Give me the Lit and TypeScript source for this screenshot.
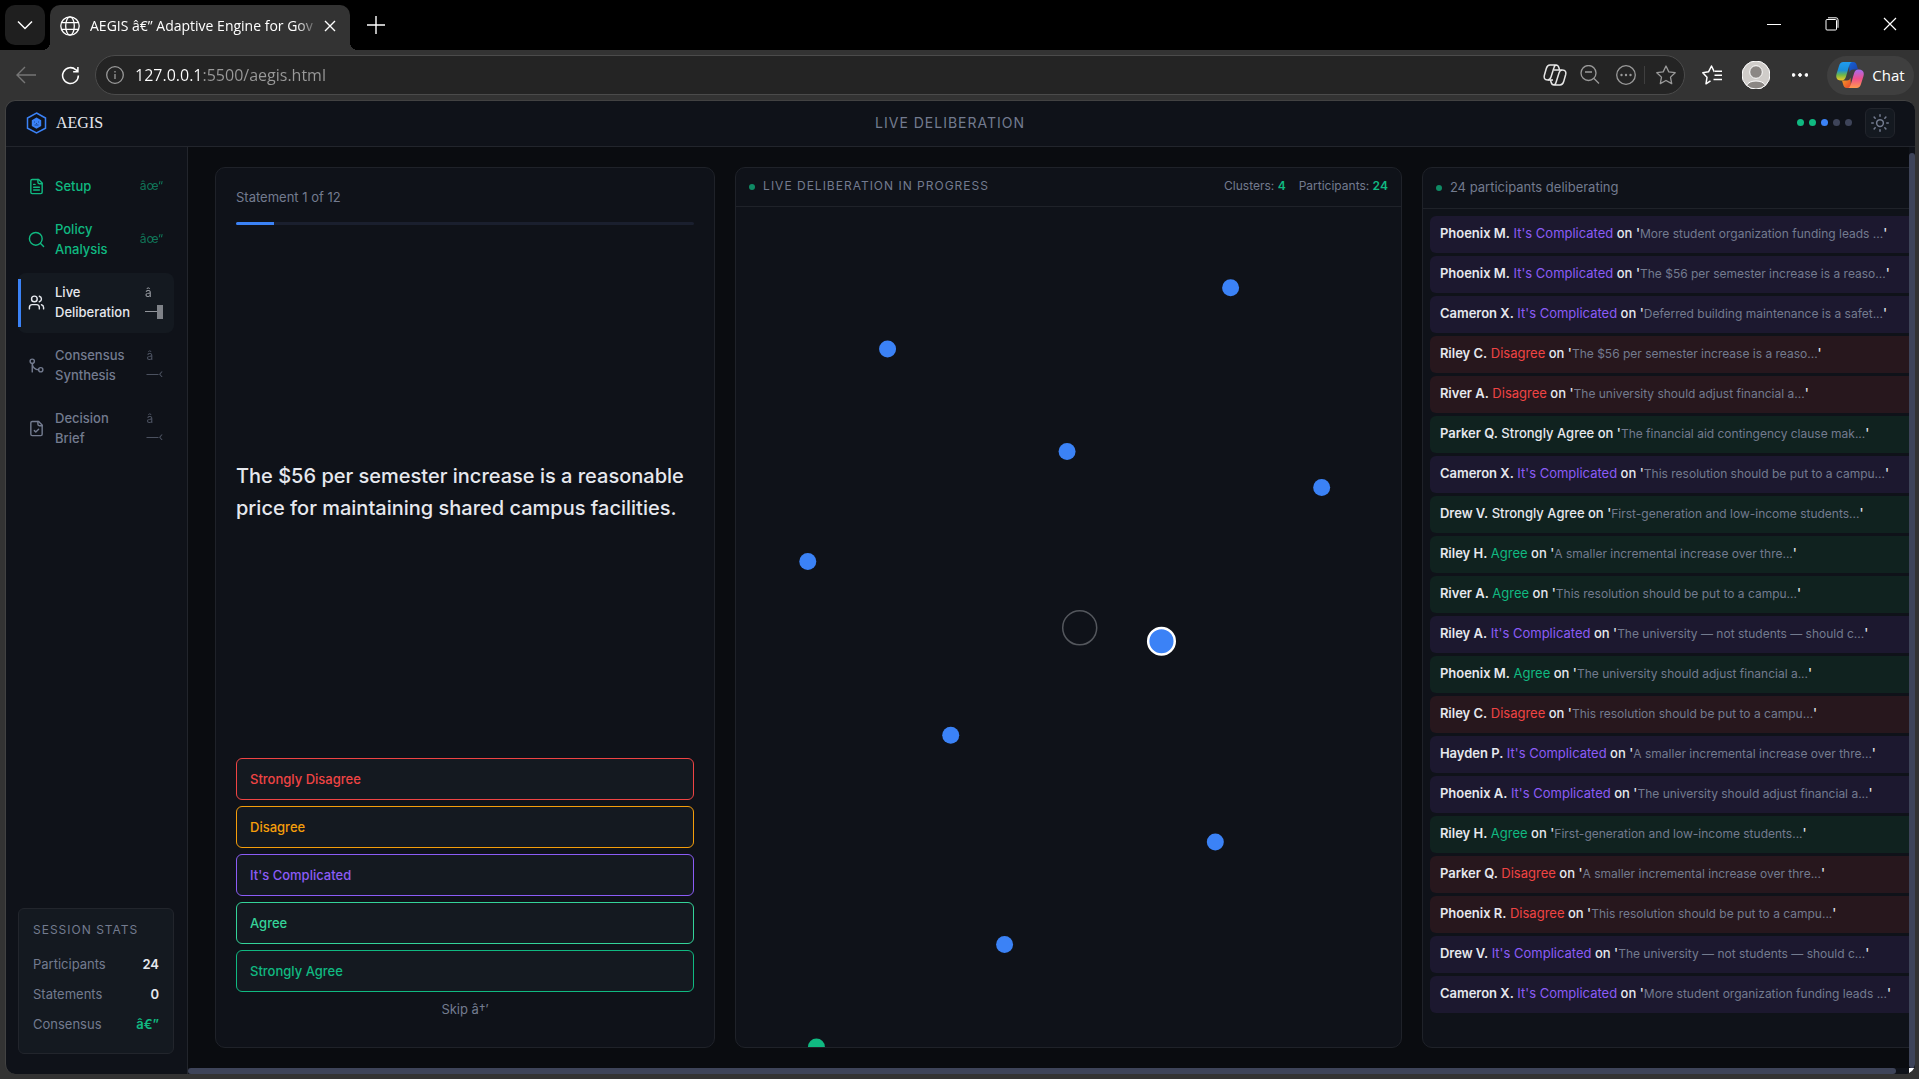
import { LitElement, html, css, svg } from "lit";
import { customElement } from "lit/decorators.js";
import { classMap } from "lit/directives/class-map.js";

type Vote = "complicated" | "disagree" | "agree" | "strong";

const VOTE_LABEL: Record<Vote, string> = {
  complicated: "It's Complicated",
  disagree: "Disagree",
  agree: "Agree",
  strong: "Strongly Agree",
};

const FEED: [string, Vote, string][] = [
  ["Phoenix M.", "complicated", "More student organization funding leads ..."],
  ["Phoenix M.", "complicated", "The $56 per semester increase is a reaso..."],
  ["Cameron X.", "complicated", "Deferred building maintenance is a safet..."],
  ["Riley C.", "disagree", "The $56 per semester increase is a reaso..."],
  ["River A.", "disagree", "The university should adjust financial a..."],
  ["Parker Q.", "strong", "The financial aid contingency clause mak..."],
  ["Cameron X.", "complicated", "This resolution should be put to a campu..."],
  ["Drew V.", "strong", "First-generation and low-income students..."],
  ["Riley H.", "agree", "A smaller incremental increase over thre..."],
  ["River A.", "agree", "This resolution should be put to a campu..."],
  ["Riley A.", "complicated", "The university — not students — should c..."],
  ["Phoenix M.", "agree", "The university should adjust financial a..."],
  ["Riley C.", "disagree", "This resolution should be put to a campu..."],
  ["Hayden P.", "complicated", "A smaller incremental increase over thre..."],
  ["Phoenix A.", "complicated", "The university should adjust financial a..."],
  ["Riley H.", "agree", "First-generation and low-income students..."],
  ["Parker Q.", "disagree", "A smaller incremental increase over thre..."],
  ["Phoenix R.", "disagree", "This resolution should be put to a campu..."],
  ["Drew V.", "complicated", "The university — not students — should c..."],
  ["Cameron X.", "complicated", "More student organization funding leads ..."],
];

/* Participant positions as percentages of the map area. */
const NODES: [number, number][] = [
  [74.4, 9.6],
  [22.8, 16.9],
  [49.8, 29.1],
  [88.1, 33.4],
  [10.8, 42.2],
  [32.3, 62.9],
  [72.1, 75.6],
  [40.4, 87.8],
];

const icons = {
  file: svg`<path d="M15 2H6a2 2 0 0 0-2 2v16a2 2 0 0 0 2 2h12a2 2 0 0 0 2-2V7Z"/><path d="M14 2v4a2 2 0 0 0 2 2h4"/><path d="M10 9H8"/><path d="M16 13H8"/><path d="M16 17H8"/>`,
  search: svg`<circle cx="11" cy="11" r="9"/><path d="m22 22-4.2-4.2"/>`,
  users: svg`<path d="M16 21v-2a4 4 0 0 0-4-4H6a4 4 0 0 0-4 4v2"/><circle cx="9" cy="7" r="4"/><path d="M22 21v-2a4 4 0 0 0-3-3.87"/><path d="M16 3.13a4 4 0 0 1 0 7.75"/>`,
  merge: svg`<circle cx="18" cy="18" r="3"/><circle cx="6" cy="6" r="3"/><path d="M6 21V9a9 9 0 0 0 9 9"/>`,
  check: svg`<path d="M15 2H6a2 2 0 0 0-2 2v16a2 2 0 0 0 2 2h12a2 2 0 0 0 2-2V7Z"/><path d="M14 2v4a2 2 0 0 0 2 2h4"/><path d="m9 15 2 2 4-4"/>`,
};

@customElement("browser-bar")
class BrowserBar extends LitElement {
  static styles = css`
    :host {
      display: block;
      font-family: "Open Sans", "Noto Sans", sans-serif;
      color: #fff;
    }
    button {
      font: inherit;
      color: inherit;
      background: none;
      border: 0;
      padding: 0;
      display: flex;
      align-items: center;
      justify-content: center;
      flex: none;
    }
    svg {
      display: block;
      fill: none;
      stroke: currentColor;
      flex: none;
    }
    .tabs {
      height: 50px;
      background: #000;
      display: flex;
      align-items: flex-start;
      padding: 5px 0 0 5px;
      box-sizing: border-box;
    }
    .menu {
      width: 40px;
      height: 40px;
      border-radius: 10px;
      background: #1f1f1f;
      margin-right: 5px;
    }
    .tab {
      position: relative;
      width: 300px;
      height: 45px;
      box-sizing: border-box;
      padding: 0 13px 4px 10px;
      border-radius: 10px 10px 0 0;
      background: #333;
      display: flex;
      align-items: center;
      gap: 10px;
      font-size: 14px;
    }
    .tab::before,
    .tab::after {
      content: "";
      position: absolute;
      bottom: 0;
      width: 8px;
      height: 8px;
    }
    .tab::before {
      left: -8px;
      background: radial-gradient(circle at 0 0, transparent 8px, #333 8px);
    }
    .tab::after {
      right: -8px;
      background: radial-gradient(circle at 100% 0, transparent 8px, #333 8px);
    }
    .title {
      flex: 1;
      min-width: 0;
      white-space: nowrap;
      -webkit-mask-image: linear-gradient(90deg, #000 90%, transparent);
      mask-image: linear-gradient(90deg, #000 90%, transparent);
    }
    .close {
      width: 14px;
      height: 20px;
      margin-left: -6px;
    }
    .new {
      width: 52px;
      height: 40px;
    }
    .win {
      margin-left: auto;
      display: flex;
    }
    .win button {
      width: 58px;
      height: 38px;
    }
    .tools {
      height: 50px;
      background: #333;
      display: flex;
      align-items: center;
      padding: 0 5px 0 3px;
    }
    .nav {
      width: 45px;
      height: 40px;
    }
    .dim {
      color: #767676;
    }
    .url {
      flex: 1;
      height: 40px;
      box-sizing: border-box;
      margin: 0 5px 0 2px;
      border: 1px solid #4b4b4b;
      border-radius: 20px;
      background: #242424;
      color: #9a9a9a;
      display: flex;
      align-items: center;
    }
    .info {
      margin: 0 11px 0 10px;
    }
    .address {
      flex: 1;
      min-width: 0;
      border: 0;
      padding: 0;
      outline: 0;
      font: inherit;
      font-size: 16px;
      line-height: 24px;
      background: linear-gradient(90deg, #fff 67px, #9a9a9a 67px);
      -webkit-background-clip: text;
      background-clip: text;
      color: transparent;
    }
    .url button {
      width: 36px;
      height: 36px;
    }
    .url .bright {
      color: #e6e6e6;
      width: 34px;
    }
    .sep {
      width: 1px;
      height: 18px;
      margin-right: 3px;
      background: #3f3f3f;
    }
    .tool {
      width: 44px;
      height: 40px;
    }
    .chat {
      width: 87px;
      height: 39px;
      margin-left: 5px;
      border-radius: 20px;
      background: #3f3f3f;
      gap: 8px;
      font-size: 15px;
    }
  `;

  render() {
    return html`
      <div class="tabs">
        <button class="menu" aria-label="Tab actions">
          <svg width="16" height="10" viewBox="0 0 16 10" stroke-width="1.5"><path d="M1 1.5 8 8.500l7-7" /></svg>
        </button>
        <div class="tab">
          <svg width="20" height="20" viewBox="0 0 20 20" stroke-width="1.3">
            <circle cx="10" cy="10" r="9.200" />
            <ellipse cx="10" cy="10" rx="4.300" ry="9.200" />
            <path d="M1.500 6.700h17M1.500 13.300h17" />
          </svg>
          <span class="title">AEGIS â€” Adaptive Engine for Gov</span>
          <button class="close" aria-label="Close tab">
            <svg width="12" height="12" viewBox="0 0 12 12" stroke-width="1.4"><path d="m1 1 10 10M11 1 1 11" /></svg>
          </button>
        </div>
        <button class="new" aria-label="New tab">
          <svg width="20" height="20" viewBox="0 0 20 20" stroke-width="1.4"><path d="M10 1v18M1 10h18" /></svg>
        </button>
        <div class="win">
          <button aria-label="Minimize">
            <svg width="14" height="14" viewBox="0 0 14 14"><path d="M0 7.500h14" /></svg>
          </button>
          <button aria-label="Restore">
            <svg width="14" height="14" viewBox="0 0 14 14">
              <rect x="1" y="2.500" width="10.500" height="10.500" rx="1" />
              <path d="M3 .8h8a2 2 0 0 1 2 2v8" />
            </svg>
          </button>
          <button aria-label="Close window">
            <svg width="14" height="14" viewBox="0 0 14 14" stroke-width="1.2"><path d="m1 1 12 12M13 1 1 13" /></svg>
          </button>
        </div>
      </div>
      <div class="tools">
        <button class="nav dim" aria-label="Back">
          <svg width="20" height="18" viewBox="0 0 20 18" stroke-width="1.4"><path d="M20 9H1M9 1 1 9l8 8" /></svg>
        </button>
        <button class="nav" aria-label="Refresh">
          <svg width="19" height="19" viewBox="0 0 20 20" stroke-width="1.6">
            <path d="M18.300 10a8.300 8.300 0 1 1-2.700-6.100L17.500 5.500M17.800 1v5h-5" />
          </svg>
        </button>
        <div class="url">
          <svg class="info" width="18" height="18" viewBox="0 0 18 18" stroke-width="1.3">
            <circle cx="9" cy="9" r="8.300" /><path d="M9 8v5M9 5v1.500" />
          </svg>
          <input class="address" aria-label="Address" value="127.0.0.1:5500/aegis.html" />
          <button class="bright" aria-label="Copilot in page">
            <svg width="24" height="22" viewBox="0 0 24 22" stroke-width="1.5" stroke-linejoin="round">
              <path d="M7 1h6c2 0 2.500 1 3 3l.5 2M13.500 1c-1 0-2 .7-2.500 2.500L8 13c-.6 2-1.500 3-3.500 3C1.500 16 .7 14 1.300 11.500l2-7C4 2 5 1 7 1Z" />
              <path d="M17 21h-6c-2 0-2.500-1-3-3l-.5-2M10.500 21c1 0 2-.7 2.500-2.500L16 9c.6-2 1.500-3 3.500-3 3 0 3.800 2 3.200 4.500l-2 7C20 20 19 21 17 21ZM11 6h8M5 16h5" />
            </svg>
          </button>
          <button aria-label="Zoom out">
            <svg width="20" height="20" viewBox="0 0 20 20" stroke-width="1.3">
              <circle cx="8.500" cy="8" r="7.500" /><path d="m14 13.500 5 5M5 7h7" />
            </svg>
          </button>
          <button aria-label="More in page">
            <svg width="20" height="20" viewBox="0 0 20 20" stroke-width="1.3">
              <circle cx="10" cy="10" r="9.300" />
              <g fill="currentColor" stroke="none"><circle cx="5.500" cy="10" r="1.200" /><circle cx="10" cy="10" r="1.200" /><circle cx="14.500" cy="10" r="1.200" /></g>
            </svg>
          </button>
          <span class="sep"></span>
          <button aria-label="Add to favourites">
            <svg width="20" height="20" viewBox="0 0 20 20" stroke-width="1.3" stroke-linejoin="round">
              <path d="m10 1 2.800 5.900 6.400.8-4.700 4.400 1.200 6.500L10 15.500l-5.700 3.100 1.200-6.500L.8 7.700l6.400-.8Z" />
            </svg>
          </button>
        </div>
        <button class="tool" aria-label="Favourites">
          <svg width="20" height="20" viewBox="0 0 20 20" stroke-width="1.500" stroke-linejoin="round">
            <path d="M8.500 15.800 4 18.800l1-6.500L.8 7.700l5.700-.9L9.500 1l2.800 5.800M12.500 10.200h7.500M13 6.200h7M11.500 14.500h8.500" />
          </svg>
        </button>
        <button class="tool" aria-label="Profile">
          <svg width="28" height="28" viewBox="0 0 28 28" stroke="none">
            <circle cx="14" cy="14" r="14" fill="#cfccc9" />
            <circle cx="14" cy="11" r="6.300" fill="#8b8784" />
            <path d="M4.500 24.300a10.500 7.500 0 0 1 19 0A14 14 0 0 1 4.500 24.300Z" fill="#8b8784" />
          </svg>
        </button>
        <button class="tool" aria-label="Settings">
          <svg width="16" height="4" viewBox="0 0 16 4" stroke="none">
            <g fill="currentColor"><circle cx="1.500" cy="2" r="1.400" /><circle cx="8" cy="2" r="1.400" /><circle cx="14.500" cy="2" r="1.400" /></g>
          </svg>
        </button>
        <button class="chat">
          <svg width="28" height="26" viewBox="0 0 28 26">
            <defs>
              <linearGradient id="a" x1="0" y1="0" x2="0" y2="1"><stop offset="0" stop-color="#1f9cf0" /><stop offset=".45" stop-color="#1a8fd8" /><stop offset=".7" stop-color="#6fb84a" /><stop offset="1" stop-color="#f5c927" /></linearGradient>
              <linearGradient id="b" x1="0" y1="1" x2="0" y2="0"><stop offset="0" stop-color="#ff9a4d" /><stop offset=".5" stop-color="#f0508c" /><stop offset="1" stop-color="#a56cf0" /></linearGradient>
              <linearGradient id="c" x1="0" y1="0" x2="1" y2="1"><stop offset="0" stop-color="#1663d8" /><stop offset="1" stop-color="#1a3fa8" /></linearGradient>
              <linearGradient id="d" x1="0" y1="0" x2="1" y2="1"><stop offset="0" stop-color="#f5a623" /><stop offset="1" stop-color="#e8402f" /></linearGradient>
            </defs>
            <g stroke="none">
              <path d="M13 0h4c2.500 0 3.300 1.500 4 4l1 3.500h-5c-2 0-3 1-3.500 3Z" fill="url(#c)" />
              <path d="M15 26h-4c-2.500 0-3.300-1.500-4-4l-1-3.500h5c2 0 3-1 3.500-3Z" fill="url(#d)" />
              <path d="M7.500 0H16c-1.600.3-2.300 2-3 4.200L10 14.500c-.8 2.700-2 4-4.500 4C1 18.500-.5 16 .5 12L3 4C3.800 1.300 5 0 7.500 0Z" fill="url(#a)" />
              <path d="M20.500 26H12c1.600-.3 2.300-2 3-4.200l3-10.300c.8-2.700 2-4 4.500-4 4.500 0 6 2.500 5 6.500L25 22c-.8 2.700-2 4-4.500 4Z" fill="url(#b)" />
            </g>
          </svg>
          Chat
        </button>
      </div>
    `;
  }
}

@customElement("app-root")
class AppRoot extends LitElement {
  static styles = css`
    :host {
      display: flex;
      flex-direction: column;
      height: 100vh;
      box-sizing: border-box;
      background: #333;
      overflow: hidden;
      font-family: Inter, sans-serif;
      font-size: 13px;
      line-height: 20px;
      color: #e6e8ee;
    }
    button {
      font: inherit;
      color: inherit;
      margin: 0;
      cursor: pointer;
    }
    ul {
      list-style: none;
      margin: 0;
      padding: 0;
    }
    svg {
      display: block;
      flex: none;
    }
    .page {
      flex: 1;
      min-height: 0;
      margin: 0 4px 5px 5px;
      border: solid #424242;
      border-width: 1px 0 0 1px;
      border-radius: 10px;
      background: #0f1219;
      overflow: hidden;
      display: flex;
      flex-direction: column;
    }
    .head {
      flex: none;
      height: 43px;
      border-bottom: 1px solid #22252c;
      padding: 0 20px 2px;
      display: flex;
      align-items: center;
      justify-content: space-between;
    }
    .brand {
      display: flex;
      align-items: center;
      gap: 9px;
      font-family: "Liberation Serif", serif;
      font-size: 16px;
      margin: 0;
      font-weight: 400;
    }
    .phase {
      font-size: 14px;
      letter-spacing: 1px;
      color: #737b8f;
    }
    .status {
      display: flex;
      align-items: center;
      gap: 13px;
    }
    .steps {
      display: flex;
      gap: 5px;
    }
    .step {
      width: 7px;
      height: 7px;
      border-radius: 50%;
      background: #3e4459;
    }
    .step.done {
      background: #10b981;
    }
    .step.now {
      background: #3b82f6;
    }
    .theme {
      width: 30px;
      height: 30px;
      padding: 0;
      border: 1px solid #22252c;
      border-radius: 6px;
      background: #141920;
      color: #737b8f;
      display: grid;
      place-items: center;
    }
    .body {
      flex: 1;
      min-height: 0;
      display: flex;
    }
    .side {
      flex: none;
      width: 181px;
      box-sizing: content-box;
      border-right: 1px solid #22252c;
      display: flex;
      flex-direction: column;
      justify-content: space-between;
    }
    .menu {
      padding: 20px 13px 0 12px;
      display: flex;
      flex-direction: column;
      gap: 3px;
    }
    .item {
      position: relative;
      width: 100%;
      min-height: 40px;
      padding: 9px 11px 11px 10px;
      border: 0;
      border-radius: 8px;
      background: none;
      display: flex;
      align-items: center;
      gap: 10px;
      text-align: left;
      font-weight: 500;
      color: #737b8f;
    }
    .item.done {
      color: #10b981;
    }
    .item.now {
      background: #141920;
      color: #e6e8ee;
    }
    .item.now::before {
      content: "";
      position: absolute;
      left: 0;
      top: 10%;
      bottom: 10%;
      width: 3px;
      background: #3b82f6;
    }
    .name {
      flex: 1;
    }
    .mark {
      font-size: 12px;
      font-weight: 400;
      opacity: 0.6;
      line-height: 18px;
    }
    .block {
      display: inline-block;
      width: 6px;
      height: 14px;
      background: #c6c8cd;
      vertical-align: middle;
    }
    .stats {
      margin: 0 13px 20px 12px;
      border: 1px solid #22252c;
      border-radius: 6px;
      background: #141920;
      padding: 11px 14px 14px;
    }
    .stats h2 {
      margin: 0 0 9px;
      font-size: 12px;
      font-weight: 400;
      letter-spacing: 1px;
      color: #737b8f;
    }
    .stat {
      height: 30px;
      display: flex;
      justify-content: space-between;
      align-items: center;
      color: #737b8f;
    }
    .stat b {
      font-weight: 600;
      color: #e6e8ee;
    }
    .stat .good {
      color: #10b981;
    }
    .main {
      flex: 1;
      min-width: 0;
      background: #0a0c10;
      display: grid;
      grid-template-columns: minmax(0, 1fr) 6px;
      grid-template-rows: minmax(0, 1fr) 6px;
    }
    .view {
      overflow: hidden;
      display: flex;
    }
    .board {
      flex: 1 0 calc(100% - 14px);
      display: grid;
      grid-template-columns: 3fr 4fr 3fr;
      grid-template-rows: minmax(0, 1fr);
      gap: 20px;
      margin: 20px -13px 20px 27px;
    }
    .card {
      min-width: 0;
      border: 1px solid #1f2229;
      border-radius: 10px;
      background: #0f1219;
      overflow: hidden;
      display: flex;
      flex-direction: column;
    }
    .vscroll {
      padding-top: 6px;
      background: #0f1219;
      display: flex;
    }
    .hscroll {
      padding-right: 13px;
      background: #0f1219;
      display: flex;
    }
    .thumb {
      flex: 1;
      border-radius: 3px;
      background: #3e4459;
    }
    .corner {
      background: #fff;
    }
    .survey {
      padding: 19px 20px 20px;
    }
    .count {
      color: #737b8f;
      margin-bottom: 15px;
    }
    .track {
      height: 3px;
      border-radius: 2px;
      background: #1a1f2e;
      overflow: hidden;
    }
    .fill {
      height: 100%;
      background: #3b82f6;
    }
    .statement {
      flex: 1;
      margin: 0;
      display: flex;
      align-items: center;
      font-size: 20px;
      line-height: 32px;
      font-weight: 500;
    }
    .votes {
      display: flex;
      flex-direction: column;
      gap: 6px;
    }
    .vote {
      height: 42px;
      padding: 0 13px;
      border: 1px solid currentColor;
      border-radius: 6px;
      background: #141920;
      text-align: left;
      font-weight: 500;
    }
    .v1 {
      color: #ef4444;
    }
    .v2 {
      color: #f59e0b;
    }
    .v3 {
      color: #8b5cf6;
    }
    .v4 {
      color: #34d399;
    }
    .v5 {
      color: #10b981;
    }
    .skip {
      border: 0;
      background: none;
      padding: 7px 0 8px;
      color: #737b8f;
    }
    .bar {
      flex: none;
      border-bottom: 1px solid #1f2229;
      display: flex;
      align-items: center;
      padding: 0 13px 2px;
      color: #737b8f;
    }
    .bar h2 {
      margin: 0;
      font-size: inherit;
      font-weight: inherit;
    }
    .live {
      height: 36px;
      font-size: 12px;
    }
    .live h2 {
      letter-spacing: 1px;
      flex: 1;
    }
    .dot {
      width: 6px;
      height: 6px;
      border-radius: 50%;
      background: #0f8a64;
      margin: 2px 8px 0 0;
    }
    .totals {
      display: flex;
      gap: 13px;
    }
    .totals b {
      font-weight: 600;
      color: #10b981;
    }
    .map {
      flex: 1;
      min-height: 0;
      width: 100%;
    }
    .people {
      height: 38px;
    }
    .feed {
      padding: 7px;
      display: flex;
      flex-direction: column;
      gap: 3px;
    }
    .entry {
      height: 37px;
      box-sizing: border-box;
      padding: 7px 10px 10px;
      border-radius: 6px;
      white-space: nowrap;
      overflow: hidden;
      font-weight: 500;
    }
    .entry b {
      font-weight: 600;
    }
    .entry q {
      quotes: none;
      font-size: 12px;
      font-weight: 400;
      color: #737b8f;
    }
    .choice {
      font-weight: 400;
    }
    .entry.complicated {
      background: #1c182f;
    }
    .complicated .choice {
      color: #8b5cf6;
    }
    .entry.disagree {
      background: #27171d;
    }
    .disagree .choice {
      color: #ef4444;
    }
    .entry.agree,
    .entry.strong {
      background: #10221f;
    }
    .agree .choice {
      color: #10b981;
    }
    .strong .choice {
      font-weight: 500;
    }
  `;

  private icon(shape: unknown, size = 17) {
    return html`<svg
      width=${size}
      height=${size}
      viewBox="0 0 24 24"
      fill="none"
      stroke="currentColor"
      stroke-width="2"
      stroke-linecap="round"
      stroke-linejoin="round"
    >${shape}</svg>`;
  }

  private item(state: string, shape: unknown, name: unknown, mark: unknown) {
    return html`<button class=${classMap({ item: true, [state]: true })}>
      ${this.icon(shape)}<span class="name">${name}</span><span class="mark">${mark}</span>
    </button>`;
  }

  render() {
    return html`
      <browser-bar></browser-bar>
      <div class="page">
        <header class="head">
          <h1 class="brand">
            <svg width="21" height="22" viewBox="0 0 21 22" fill="none" stroke="#3b82f6">
              <path d="M10.500 1 19.500 6v10.200L10.500 21l-9-4.800V6Z" stroke-width="1.500" />
              <path d="m10.500 5.500 4.700 2.700v5.800l-4.700 2.700L5.800 14V8.200Z" fill="#3b82f6" stroke="none" />
              <path d="M8.500 9.500v1M12.500 9.500v1M8.500 13h4M10.500 11v1" stroke="#173a78" stroke-width=".8" />
            </svg>
            AEGIS
          </h1>
          <div class="phase">LIVE DELIBERATION</div>
          <div class="status">
            <div class="steps">
              <span class="step done"></span><span class="step done"></span><span class="step now"></span
              ><span class="step"></span><span class="step"></span>
            </div>
            <button class="theme" aria-label="Toggle theme">
              ${this.icon(
                svg`<circle cx="12" cy="12" r="4.500"/><path d="M12 1v2M12 21v2M4.200 4.200l1.400 1.400M18.400 18.400l1.400 1.400M1 12h2M21 12h2M4.200 19.800l1.400-1.400M18.400 5.600l1.400-1.400"/>`,
                18
              )}
            </button>
          </div>
        </header>
        <div class="body">
          <aside class="side">
            <nav class="menu">
              ${this.item("done", icons.file, "Setup", "âœ“")}
              ${this.item("done", icons.search, html`Policy<br />Analysis`, "âœ“")}
              ${this.item("now", icons.users, html`Live<br />Deliberation`, html`â<br />—<span class="block"></span>`)}
              ${this.item("todo", icons.merge, html`Consensus<br />Synthesis`, html`â<br />—‹`)}
              ${this.item("todo", icons.check, html`Decision<br />Brief`, html`â<br />—‹`)}
            </nav>
            <section class="stats">
              <h2>SESSION STATS</h2>
              <div class="stat">Participants <b>24</b></div>
              <div class="stat">Statements <b>0</b></div>
              <div class="stat">Consensus <b class="good">â€”</b></div>
            </section>
          </aside>
          <main class="main">
            <div class="view">
              <div class="board">
                <section class="card survey">
                  <div class="count">Statement 1 of 12</div>
                  <div class="track"><div class="fill" style="width:${(100 / 12).toFixed(2)}%"></div></div>
                  <p class="statement">
                    The $56 per semester increase is a reasonable price for maintaining shared campus facilities.
                  </p>
                  <div class="votes">
                    <button class="vote v1">Strongly Disagree</button>
                    <button class="vote v2">Disagree</button>
                    <button class="vote v3">It's Complicated</button>
                    <button class="vote v4">Agree</button>
                    <button class="vote v5">Strongly Agree</button>
                  </div>
                  <button class="skip">Skip â†’</button>
                </section>
                <section class="card">
                  <div class="bar live">
                    <span class="dot"></span>
                    <h2>LIVE DELIBERATION IN PROGRESS</h2>
                    <div class="totals">
                      <span>Clusters: <b>4</b></span><span>Participants: <b>24</b></span>
                    </div>
                  </div>
                  <svg class="map" role="img" aria-label="Opinion map">
                    ${NODES.map(([x, y]) => svg`<circle cx="${x}%" cy="${y}%" r="8.500" fill="#3b82f6"/>`)}
                    <circle cx="12.1%" cy="100%" r="8.500" fill="#10b981" />
                    <circle cx="51.7%" cy="50.1%" r="17" fill="none" stroke="#54575d" stroke-width="1.500" />
                    <circle cx="64%" cy="51.7%" r="13.300" fill="#3b82f6" stroke="#fff" stroke-width="2.500" />
                  </svg>
                </section>
                <section class="card">
                  <div class="bar people"><span class="dot"></span><h2>24 participants deliberating</h2></div>
                  <ul class="feed">
                    ${FEED.map(
                      ([who, vote, text]) => html`<li class="entry ${vote}">
                        <b>${who}</b> <span class="choice">${VOTE_LABEL[vote]}</span> on '<q>${text}</q>'
                      </li>`
                    )}
                  </ul>
                </section>
              </div>
            </div>
            <div class="vscroll"><div class="thumb"></div></div>
            <div class="hscroll"><div class="thumb"></div></div>
            <div class="corner"></div>
          </main>
        </div>
      </div>
    `;
  }
}
